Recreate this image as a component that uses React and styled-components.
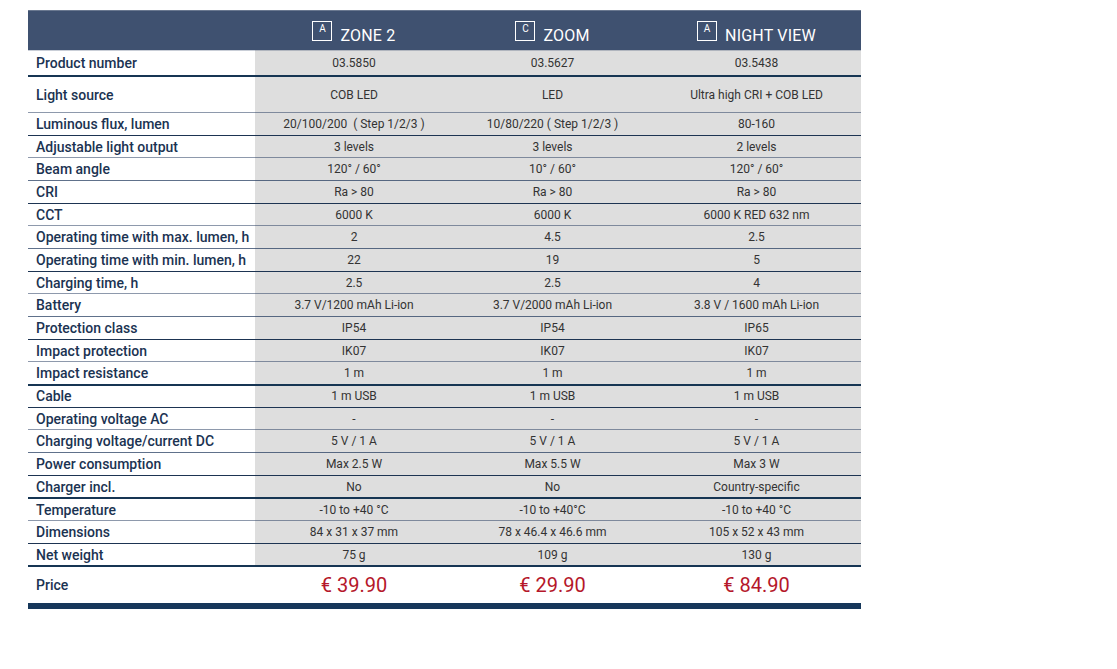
import React from 'react';
import styled, { createGlobalStyle } from 'styled-components';

const GlobalStyle = createGlobalStyle`
  body {
    margin: 0;
    background: #fff;
    font-family: Roboto, "Liberation Sans", sans-serif;
  }
`;

const products = [
    { badge: 'A', name: 'ZONE 2', price: '€ 39.90' },
    { badge: 'C', name: 'ZOOM', price: '€ 29.90' },
    { badge: 'A', name: 'NIGHT VIEW', price: '€ 84.90' },
];

// line: tone of the line on top of the row
const rows = [
    { label: 'Product number', values: ['03.5850', '03.5627', '03.5438'], line: 'header', h: 25 },
    { label: 'Light source', values: ['COB LED', 'LED', 'Ultra high CRI + COB LED'], line: 'thick', h: 37 },
    { label: 'Luminous flux, lumen', values: ['20/100/200  ( Step 1/2/3 )', '10/80/220 ( Step 1/2/3 )', '80-160'], line: 'light' },
    { label: 'Adjustable light output', values: ['3 levels', '3 levels', '2 levels'], line: 'dark' },
    { label: 'Beam angle', values: ['120° / 60°', '10° / 60°', '120° / 60°'], line: 'light' },
    { label: 'CRI', values: ['Ra > 80', 'Ra > 80', 'Ra > 80'], line: 'mid' },
    { label: 'CCT', values: ['6000 K', '6000 K', '6000 K RED 632 nm'], line: 'dark' },
    { label: 'Operating time with max. lumen, h', values: ['2', '4.5', '2.5'], line: 'light' },
    { label: 'Operating time with min. lumen, h', values: ['22', '19', '5'], line: 'mid' },
    { label: 'Charging time, h', values: ['2.5', '2.5', '4'], line: 'dark' },
    { label: 'Battery', values: ['3.7 V/1200 mAh Li-ion', '3.7 V/2000 mAh Li-ion', '3.8 V / 1600 mAh Li-ion'], line: 'light' },
    { label: 'Protection class', values: ['IP54', 'IP54', 'IP65'], line: 'mid' },
    { label: 'Impact protection', values: ['IK07', 'IK07', 'IK07'], line: 'dark' },
    { label: 'Impact resistance', values: ['1 m', '1 m', '1 m'], line: 'light' },
    { label: 'Cable', values: ['1 m USB', '1 m USB', '1 m USB'], line: 'thick' },
    { label: 'Operating voltage AC', values: ['-', '-', '-'], line: 'dark' },
    { label: 'Charging voltage/current DC', values: ['5 V / 1 A', '5 V / 1 A', '5 V / 1 A'], line: 'light' },
    { label: 'Power consumption', values: ['Max 2.5 W', 'Max 5.5 W', 'Max 3 W'], line: 'mid' },
    { label: 'Charger incl.', values: ['No', 'No', 'Country-specific'], line: 'dark' },
    { label: 'Temperature', values: ['-10 to +40 °C', '-10 to +40°C', '-10 to +40 °C'], line: 'thick' },
    { label: 'Dimensions', values: ['84 x 31 x 37 mm', '78 x 46.4 x 46.6 mm', '105 x 52 x 43 mm'], line: 'light' },
    { label: 'Net weight', values: ['75 g', '109 g', '130 g'], line: 'dark' },
];

const lines = {
    header: '1px solid rgba(40, 60, 95, 0.25)',
    thick: '2px solid #163553',
    dark: '1px solid #1d3452',
    mid: '1px solid rgba(29, 52, 90, 0.7)',
    light: '1px solid rgba(29, 52, 90, 0.5)',
};

const App = () => {
    return (
        <>
            <GlobalStyle />
            <Page>
                <Table>
                    <HeadRow>
                        <HeadCell />
                        {products.map(p => (
                            <HeadCell key={p.name}>
                                <Badge>{p.badge}</Badge>
                                <HeadName>{p.name}</HeadName>
                            </HeadCell>
                        ))}
                    </HeadRow>
                    {rows.map(r => (
                        <Row key={r.label} $h={r.h || 22.68}>
                            <Label $line={lines[r.line]}>{r.label}</Label>
                            {r.values.map((v, i) => (
                                <Value key={i} $line={lines[r.line]}>{v}</Value>
                            ))}
                        </Row>
                    ))}
                    <PriceRow>
                        <PriceLabel>Price</PriceLabel>
                        {products.map(p => (
                            <Price key={p.name}>{p.price}</Price>
                        ))}
                    </PriceRow>
                    <BottomBar />
                </Table>
            </Page>
        </>
    )
}

const Page = styled.div`
  padding: 10px 0 0 28px;
`;

const Table = styled.div`
  width: 833px;
`;

const grid = `
  display: grid;
  grid-template-columns: 227px 198px 199px 209px;
`;

const HeadRow = styled.div`
  ${grid};
  height: 40px;
  box-sizing: border-box;
  background: #3f5170;
  border-top: 1px solid #6a7890;
`;

const HeadCell = styled.div`
  display: flex;
  justify-content: center;
  align-items: flex-end;
  gap: 8px;
  padding-bottom: 6.5px;
  color: #fff;
`;

const Badge = styled.div`
  box-sizing: border-box;
  width: 20px;
  height: 20px;
  border: 1px solid #fff;
  font-size: 10px;
  line-height: 14px;
  text-align: center;
  margin-bottom: 2.5px;
`;

const HeadName = styled.div`
  font-size: 16px;
  line-height: 16px;
  letter-spacing: 0.2px;
`;

const Row = styled.div`
  ${grid};
  height: ${p => p.$h}px;
`;

const Cell = styled.div`
  display: flex;
  align-items: center;
  box-sizing: border-box;
  border-top: ${p => p.$line};
  white-space: pre;
`;

const Label = styled(Cell)`
  background: #fff;
  padding-left: 8px;
  font-size: 14px;
  font-weight: 500;
  color: #1b3352;
`;

const Value = styled(Cell)`
  justify-content: center;
  background: #dedede;
  font-size: 12px;
  color: #333;
`;

const PriceRow = styled.div`
  ${grid};
  height: 37.6px;
  box-sizing: border-box;
  border-top: 2px solid #163553;
  background: #fff;
`;

const PriceLabel = styled.div`
  display: flex;
  align-items: center;
  padding-left: 8px;
  font-size: 14px;
  font-weight: 500;
  color: #1b3352;
`;

const Price = styled.div`
  display: flex;
  align-items: center;
  justify-content: center;
  font-size: 20px;
  color: #b5172a;
`;

const BottomBar = styled.div`
  height: 6px;
  background: #16375a;
`;

export default App;
